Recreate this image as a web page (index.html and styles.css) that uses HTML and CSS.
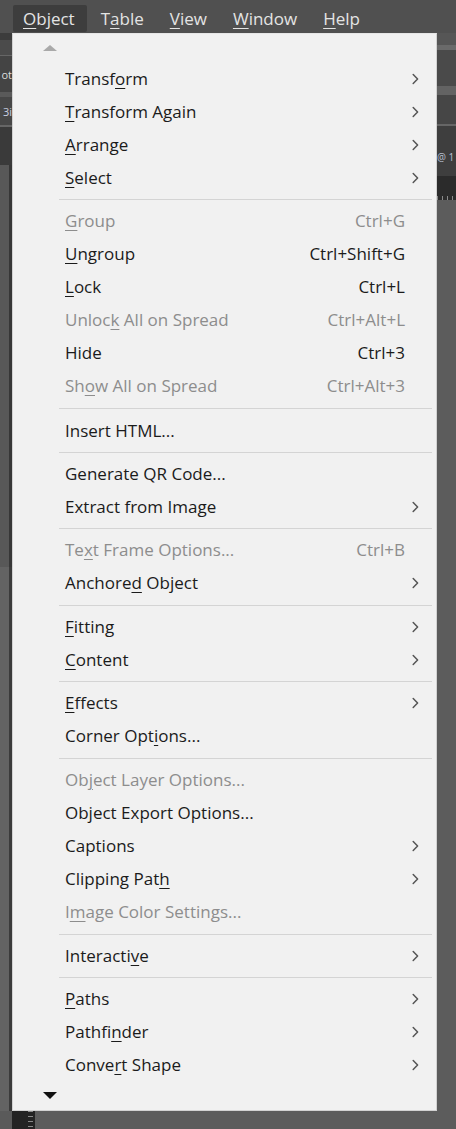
FILE: index.html
```html
<!DOCTYPE html>
<html lang="en">
<head>
<meta charset="utf-8">
<title>Object menu</title>
<link rel="stylesheet" href="styles.css">
</head>
<body>
<div class="app">
  <header class="menubar">
    <span class="mb-item active"><u>O</u>bject</span>
    <span class="mb-item">T<u>a</u>ble</span>
    <span class="mb-item"><u>V</u>iew</span>
    <span class="mb-item"><u>W</u>indow</span>
    <span class="mb-item"><u>H</u>elp</span>
  </header>

  <div class="workspace">
    <aside class="left-strip">
      <div class="ls ls-a"></div>
      <div class="ls ls-b"></div>
      <div class="ls ls-line"></div>
      <div class="ls ls-c"><span>ot</span></div>
      <div class="ls ls-d"></div>
      <div class="ls ls-e"><span>3i</span></div>
      <div class="ls ls-line2"></div>
      <div class="ls ls-f"></div>
      <div class="ls ls-g"></div>
      <div class="ls ls-h"></div>
    </aside>

    <nav class="menu">
      <div class="scroll scroll-up"><span class="tri tri-up"></span></div>

      <div class="item"><span class="label">Transf<u>o</u>rm</span><span class="key"></span><span class="sub"><svg viewBox="0 0 7 12" width="7" height="12"><path d="M1.2 1.5 L5.6 6 L1.2 10.5"/></svg></span></div>
      <div class="item"><span class="label"><u>T</u>ransform Again</span><span class="key"></span><span class="sub"><svg viewBox="0 0 7 12" width="7" height="12"><path d="M1.2 1.5 L5.6 6 L1.2 10.5"/></svg></span></div>
      <div class="item"><span class="label"><u>A</u>rrange</span><span class="key"></span><span class="sub"><svg viewBox="0 0 7 12" width="7" height="12"><path d="M1.2 1.5 L5.6 6 L1.2 10.5"/></svg></span></div>
      <div class="item"><span class="label"><u>S</u>elect</span><span class="key"></span><span class="sub"><svg viewBox="0 0 7 12" width="7" height="12"><path d="M1.2 1.5 L5.6 6 L1.2 10.5"/></svg></span></div>
      <div class="sep"></div>
      <div class="item disabled"><span class="label"><u>G</u>roup</span><span class="key">Ctrl+G</span><span class="sub"></span></div>
      <div class="item"><span class="label"><u>U</u>ngroup</span><span class="key">Ctrl+Shift+G</span><span class="sub"></span></div>
      <div class="item"><span class="label"><u>L</u>ock</span><span class="key">Ctrl+L</span><span class="sub"></span></div>
      <div class="item disabled"><span class="label">Unloc<u>k</u> All on Spread</span><span class="key">Ctrl+Alt+L</span><span class="sub"></span></div>
      <div class="item"><span class="label">Hide</span><span class="key">Ctrl+3</span><span class="sub"></span></div>
      <div class="item disabled"><span class="label">Sh<u>o</u>w All on Spread</span><span class="key">Ctrl+Alt+3</span><span class="sub"></span></div>
      <div class="sep sep-12"></div>
      <div class="item"><span class="label">Insert HTML...</span><span class="key"></span><span class="sub"></span></div>
      <div class="sep"></div>
      <div class="item"><span class="label">Generate QR Code...</span><span class="key"></span><span class="sub"></span></div>
      <div class="item"><span class="label">Extract from Image</span><span class="key"></span><span class="sub"><svg viewBox="0 0 7 12" width="7" height="12"><path d="M1.2 1.5 L5.6 6 L1.2 10.5"/></svg></span></div>
      <div class="sep"></div>
      <div class="item disabled"><span class="label">Te<u>x</u>t Frame Options...</span><span class="key">Ctrl+B</span><span class="sub"></span></div>
      <div class="item"><span class="label">Anchore<u>d</u> Object</span><span class="key"></span><span class="sub"><svg viewBox="0 0 7 12" width="7" height="12"><path d="M1.2 1.5 L5.6 6 L1.2 10.5"/></svg></span></div>
      <div class="sep sep-11"></div>
      <div class="item"><span class="label"><u>F</u>itting</span><span class="key"></span><span class="sub"><svg viewBox="0 0 7 12" width="7" height="12"><path d="M1.2 1.5 L5.6 6 L1.2 10.5"/></svg></span></div>
      <div class="item"><span class="label"><u>C</u>ontent</span><span class="key"></span><span class="sub"><svg viewBox="0 0 7 12" width="7" height="12"><path d="M1.2 1.5 L5.6 6 L1.2 10.5"/></svg></span></div>
      <div class="sep"></div>
      <div class="item"><span class="label"><u>E</u>ffects</span><span class="key"></span><span class="sub"><svg viewBox="0 0 7 12" width="7" height="12"><path d="M1.2 1.5 L5.6 6 L1.2 10.5"/></svg></span></div>
      <div class="item"><span class="label">Corner Opt<u>i</u>ons...</span><span class="key"></span><span class="sub"></span></div>
      <div class="sep sep-11"></div>
      <div class="item disabled"><span class="label">Ob<u>j</u>ect Layer Options...</span><span class="key"></span><span class="sub"></span></div>
      <div class="item"><span class="label">Object Export Options...</span><span class="key"></span><span class="sub"></span></div>
      <div class="item"><span class="label">Captions</span><span class="key"></span><span class="sub"><svg viewBox="0 0 7 12" width="7" height="12"><path d="M1.2 1.5 L5.6 6 L1.2 10.5"/></svg></span></div>
      <div class="item"><span class="label">Clipping Pat<u>h</u></span><span class="key"></span><span class="sub"><svg viewBox="0 0 7 12" width="7" height="12"><path d="M1.2 1.5 L5.6 6 L1.2 10.5"/></svg></span></div>
      <div class="item disabled"><span class="label">I<u>m</u>age Color Settings...</span><span class="key"></span><span class="sub"></span></div>
      <div class="sep sep-11"></div>
      <div class="item"><span class="label">Interacti<u>v</u>e</span><span class="key"></span><span class="sub"><svg viewBox="0 0 7 12" width="7" height="12"><path d="M1.2 1.5 L5.6 6 L1.2 10.5"/></svg></span></div>
      <div class="sep"></div>
      <div class="item"><span class="label"><u>P</u>aths</span><span class="key"></span><span class="sub"><svg viewBox="0 0 7 12" width="7" height="12"><path d="M1.2 1.5 L5.6 6 L1.2 10.5"/></svg></span></div>
      <div class="item"><span class="label">Pathfi<u>n</u>der</span><span class="key"></span><span class="sub"><svg viewBox="0 0 7 12" width="7" height="12"><path d="M1.2 1.5 L5.6 6 L1.2 10.5"/></svg></span></div>
      <div class="item"><span class="label">Conve<u>r</u>t Shape</span><span class="key"></span><span class="sub"><svg viewBox="0 0 7 12" width="7" height="12"><path d="M1.2 1.5 L5.6 6 L1.2 10.5"/></svg></span></div>

      <div class="scroll scroll-down"><span class="tri tri-down"></span></div>
    </nav>

    <aside class="right-strip">
      <div class="rs rs-a"></div>
      <div class="rs rs-b"></div>
      <div class="rs rs-c"></div>
      <div class="rs rs-d"></div>
      <div class="rs rs-e"></div>
      <div class="rs rs-line"></div>
      <div class="rs rs-f"><span>@ 1</span></div>
      <div class="rs rs-ruler"></div>
      <div class="rs rs-g"></div>
    </aside>
  </div>

  <footer class="bottom">
    <div class="bt-left"></div>
    <div class="bt-ruler"></div>
    <div class="bt-rest"></div>
  </footer>
</div>
</body>
</html>
```

FILE: styles.css
```css
* { box-sizing: border-box; }

html, body {
  margin: 0;
  padding: 0;
  background: #535353;
}

body {
  width: 456px;
  height: 1129px;
  overflow: hidden;
  font-family: "Open Sans", "Noto Sans", "Liberation Sans", sans-serif;
}

.app {
  display: flex;
  flex-direction: column;
  width: 456px;
  height: 1129px;
}

/* ---------- menu bar ---------- */
.menubar {
  height: 33px;
  flex: 0 0 33px;
  display: flex;
  align-items: flex-start;
  gap: 4px;
  padding-left: 13px;
  background: #505050;
}

.mb-item {
  margin-top: 5px;
  height: 27px;
  line-height: 27px;
  padding: 0 12px 0 10px;
  font-size: 17px;
  color: #e4e4e4;
  border-radius: 2px;
}

.mb-item.active {
  background: #3d3d3d;
}

.mb-item u,
.label u {
  text-decoration-thickness: 1px;
  text-underline-offset: 3px;
}

/* ---------- workspace ---------- */
.workspace {
  display: flex;
  height: 1078px;
  flex: 0 0 1078px;
}

.left-strip {
  width: 12px;
  flex: 0 0 12px;
  display: flex;
  flex-direction: column;
  overflow: hidden;
}

.ls { flex: 0 0 auto; }
.ls-a { height: 7px; background: #3c3c3c; }
.ls-b { height: 15px; background: #4b4b4b; }
.ls-line { height: 1px; background: #666; }
.ls-c, .ls-e {
  display: flex;
  align-items: center;
  justify-content: flex-end;
  font-size: 11px;
  color: #dcdcdc;
  white-space: nowrap;
  overflow: hidden;
}
.ls-c { height: 36px; background: #444; }
.ls-d { height: 5px; background: #5a5a5a; }
.ls-e { height: 28px; background: #474747; color: #c9cfe0; }
.ls-line2 { height: 2px; background: #666; }
.ls-f { height: 38px; background: #3a3a3a; }
.ls-g {
  height: 402px;
  background: linear-gradient(to right, #585858 0 9px, #373737 9px 12px);
}
.ls-h {
  flex: 1 1 auto;
  background: linear-gradient(to right, #636363 0 9px, #3b3b3b 9px 12px);
}

/* ---------- the dropdown ---------- */
.menu {
  width: 425px;
  flex: 0 0 425px;
  display: flex;
  flex-direction: column;
  background: #f1f1f1;
  border: 1px solid #d2d2d2;
  border-top-color: #e6e6e6;
}

.scroll {
  height: 28.5px;
  flex: 0 0 28.5px;
  padding-left: 30px;
}
.scroll-up { padding-top: 11px; }
.scroll-down { padding-top: 10.5px; }

.tri {
  display: block;
  width: 0;
  height: 0;
  border-left: 7px solid transparent;
  border-right: 7px solid transparent;
}
.tri-up { border-bottom: 6px solid #a9a9a9; }
.tri-down { border-top: 7px solid #111; }

.item {
  height: 33px;
  flex: 0 0 33px;
  display: grid;
  grid-template-columns: 1fr auto 14px;
  align-items: center;
  padding: 0 17px 2px 52px;
  font-size: 17px;
  color: #1b1b1b;
  white-space: nowrap;
}

.item.disabled { color: #8d8d8d; }

.key {
  text-align: right;
}

.sub {
  display: flex;
  justify-content: flex-end;
  align-items: center;
  padding-top: 2px;
}

.sub svg path {
  fill: none;
  stroke: #555;
  stroke-width: 1.5;
  stroke-linecap: round;
  stroke-linejoin: round;
}

.sep {
  height: 10px;
  flex: 0 0 10px;
  display: flex;
  align-items: center;
  margin: 0 4px 0 46px;
}
.sep.sep-11 {
  height: 11px;
  flex-basis: 11px;
}
.sep.sep-12 {
  height: 12px;
  flex-basis: 12px;
}
.sep::before {
  content: "";
  display: block;
  width: 100%;
  height: 1px;
  background: #d4d4d4;
}

/* ---------- right strip ---------- */
.right-strip {
  flex: 1 1 auto;
  display: flex;
  flex-direction: column;
  overflow: hidden;
}
.rs { flex: 0 0 auto; }
.rs-a { height: 12px; background: #565656; }
.rs-b { height: 5px; background: #6a6a6a; }
.rs-c { height: 36px; background: #4a4a4a; }
.rs-d { height: 9px; background: #636363; }
.rs-e { height: 29px; background: #464646; }
.rs-line { height: 2px; background: #666; }
.rs-f {
  height: 50px;
  background: #3e3e3e;
  display: flex;
  align-items: flex-end;
  padding-bottom: 12px;
  font-size: 10px;
  color: #b8c0d2;
  white-space: nowrap;
}
.rs-ruler {
  height: 24px;
  background:
    repeating-linear-gradient(to right, #8a8a8a 0 1px, transparent 1px 5px) bottom left / 100% 4px no-repeat,
    #2b2b2b;
}
.rs-g { flex: 1 1 auto; background: #5c5c5c; }

/* ---------- bottom ---------- */
.bottom {
  flex: 1 1 auto;
  display: flex;
}
.bt-left { width: 12px; background: #5a5a5a; }
.bt-ruler {
  width: 23px;
  background:
    repeating-linear-gradient(to bottom, #8a8a8a 0 1px, transparent 1px 5px) right 2px top / 5px 100% no-repeat,
    #232323;
}
.bt-rest { flex: 1 1 auto; background: #5c5c5c; }
```
